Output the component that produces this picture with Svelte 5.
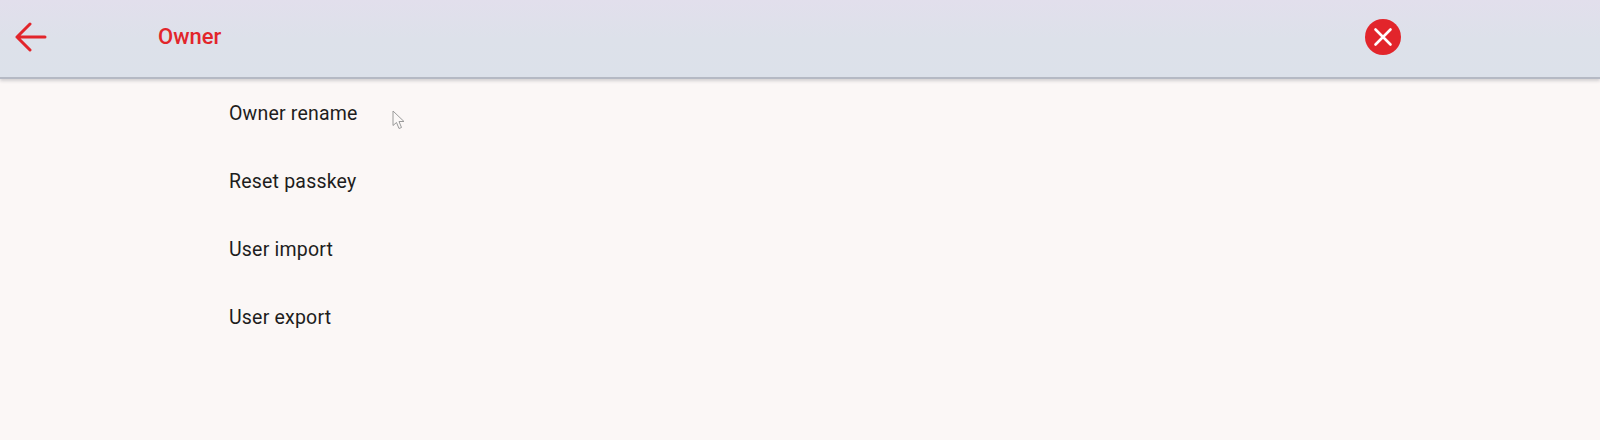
<script>
  const items = ['Owner rename', 'Reset passkey', 'User import', 'User export'];
</script>

<div class="page">
  <header class="bar">
    <button class="back" aria-label="Back">
      <svg width="32" height="30" viewBox="0 0 32 30" fill="none" stroke="#e2252b" stroke-width="3" stroke-linecap="round" stroke-linejoin="round">
        <path d="M2 15H30M15 2L2 15L15 28" />
      </svg>
    </button>
    <h1>Owner</h1>
    <button class="close" aria-label="Close">
      <svg width="36" height="36" viewBox="0 0 36 36" fill="none">
        <circle cx="18" cy="18" r="18" fill="#e2252b" />
        <path d="M10.5 10.5L25.5 25.5M25.5 10.5L10.5 25.5" stroke="#fff" stroke-width="2.6" stroke-linecap="round" />
      </svg>
    </button>
  </header>
  <ul class="list">
    {#each items as item}
      <li>{item}</li>
    {/each}
  </ul>
  <svg class="cursor" width="14" height="20" viewBox="0 0 14 20" fill="#fbf8f7" stroke="#9a9a9a" stroke-width="1">
    <path d="M1 1V15.5L4.5 12.5L7 18.5L9.5 17.5L7 11.5H12Z" />
  </svg>
</div>

<style>
  :global(body) {
    margin: 0;
    background: #fbf7f6;
  }
  .page {
    position: relative;
    width: 1600px;
    height: 440px;
    overflow: hidden;
    background: #fbf7f6;
    font-family: Roboto, "Liberation Sans", sans-serif;
  }
  .bar {
    display: flex;
    align-items: center;
    box-sizing: border-box;
    height: 79px;
    padding-bottom: 4px;
    background: linear-gradient(180deg, #e2dfec 0%, #dde1ea 50%, #dce1ea 100%);
    border-bottom: 2px solid #b5b9c4;
    box-shadow: 0 2px 3px rgba(120, 120, 130, 0.3);
  }
  button {
    display: flex;
    padding: 0;
    border: 0;
    background: none;
  }
  .back {
    margin-left: 15px;
  }
  h1 {
    flex: 1;
    margin: 0 0 0 111px;
    color: #e2252b;
    font-size: 22px;
    font-weight: 500;
  }
  .close {
    margin-right: 199px;
  }
  .list {
    margin: 0;
    padding: 0 0 0 229px;
    list-style: none;
  }
  li {
    display: flex;
    align-items: center;
    height: 68px;
    color: #1e1d20;
    font-size: 19.5px;
    letter-spacing: 0.2px;
  }
  .cursor {
    position: absolute;
    left: 392px;
    top: 110px;
  }
</style>
